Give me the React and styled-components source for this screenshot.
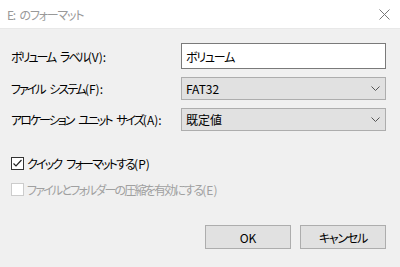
import React, { useState } from "react";
import styled, { createGlobalStyle } from "styled-components";

const GlobalStyle = createGlobalStyle`
  html, body {
    margin: 0;
    padding: 0;
    background: #f0f0f0;
  }
  body {
    font-family: "Noto Sans CJK JP", "Noto Sans", sans-serif;
    font-size: 12px;
    font-feature-settings: "palt";
    color: #000;
  }
`;

const Window = styled.div`
  width: 400px;
  height: 267px;
  display: flex;
  flex-direction: column;
  background: #f0f0f0;
  overflow: hidden;
`;

const TitleBar = styled.div`
  height: 29px;
  display: flex;
  align-items: center;
  justify-content: space-between;
  padding: 0 10px 0 7px;
  background: #ffffff;
  border-bottom: 1px solid #e8e8e8;
  box-sizing: border-box;
`;

const Title = styled.span`
  color: #999999;
  font-size: 12px;
  letter-spacing: -1.2px;
  word-spacing: 3px;
`;

const Body = styled.div`
  flex: 1;
  display: flex;
  flex-direction: column;
  padding: 14px 14px 0 11px;
`;

const Form = styled.div`
  display: grid;
  grid-template-columns: 170px 205px;
  row-gap: 8px;
  align-items: center;
`;

const Label = styled.label`
  font-size: 12px;
  white-space: nowrap;
  letter-spacing: -2px;
  word-spacing: 4px;
`;

/* access key suffix, e.g. (V): — latin glyphs keep normal spacing */
const Key = styled.span`
  letter-spacing: 0;
`;

const TextInput = styled.input`
  box-sizing: border-box;
  width: 205px;
  height: 26px;
  border: 1px solid #7a7a7a;
  background: #ffffff;
  font: inherit;
  font-size: 12px;
  letter-spacing: -1.2px;
  padding: 0 4px;
  outline: none;
`;

const SelectBox = styled.div`
  box-sizing: border-box;
  width: 205px;
  height: 23px;
  border: 1px solid #adadad;
  background: #e1e1e1;
  display: flex;
  align-items: center;
  justify-content: space-between;
  padding: 0 5px 0 4px;
`;

const Checks = styled.div`
  display: flex;
  flex-direction: column;
  gap: 13px;
  margin-top: 26px;
`;

const CheckRow = styled.label`
  display: flex;
  align-items: center;
  gap: 3px;
  height: 13px;
  white-space: nowrap;
  letter-spacing: -1.8px;
  word-spacing: 4px;
  color: ${(p) => (p.$disabled ? "#a0a0a0" : "#000")};
`;

const Box = styled.span`
  box-sizing: border-box;
  width: 13px;
  height: 13px;
  border: 1px solid ${(p) => (p.$disabled ? "#cccccc" : "#333333")};
  background: #ffffff;
  display: flex;
  align-items: center;
  justify-content: center;
`;

const Buttons = styled.div`
  display: flex;
  justify-content: flex-end;
  gap: 9px;
  margin-top: 29px;
`;

const Button = styled.button`
  box-sizing: border-box;
  width: 86px;
  height: 24px;
  border: 1px solid #adadad;
  background: #e1e1e1;
  font: inherit;
  font-size: 12px;
  letter-spacing: ${(p) => (p.$jp ? "-1.2px" : "0")};
  color: #000;
  padding: 0;
`;

const Chevron = () => (
  <svg width="9" height="5" viewBox="0 0 9 5">
    <path d="M0.5 0.5 L4.5 4.5 L8.5 0.5" fill="none" stroke="#555" strokeWidth="1" />
  </svg>
);

const Close = () => (
  <svg width="11" height="11" viewBox="0 0 11 11">
    <path d="M0.5 0.5 L10.5 10.5 M10.5 0.5 L0.5 10.5" stroke="#777" strokeWidth="1" />
  </svg>
);

const Tick = () => (
  <svg width="11" height="11" viewBox="0 0 11 11">
    <path d="M1.5 5.5 L4 8 L9.5 2" fill="none" stroke="#222" strokeWidth="1.2" />
  </svg>
);

export default function App() {
  const [label, setLabel] = useState("ボリューム");

  return (
    <Window>
      <GlobalStyle />
      <TitleBar>
        <Title>E: のフォーマット</Title>
        <Close />
      </TitleBar>
      <Body>
        <Form>
          <Label>
            ボリューム ラベル<Key>(V):</Key>
          </Label>
          <TextInput value={label} onChange={(e) => setLabel(e.target.value)} />
          <Label>
            ファイル システム<Key>(F):</Key>
          </Label>
          <SelectBox>
            FAT32
            <Chevron />
          </SelectBox>
          <Label>
            アロケーション ユニット サイズ<Key>(A):</Key>
          </Label>
          <SelectBox>
            既定値
            <Chevron />
          </SelectBox>
        </Form>
        <Checks>
          <CheckRow>
            <Box>
              <Tick />
            </Box>
            <span>
              クイック フォーマットする<Key>(P)</Key>
            </span>
          </CheckRow>
          <CheckRow $disabled>
            <Box $disabled />
            <span>
              ファイルとフォルダーの圧縮を有効にする<Key>(E)</Key>
            </span>
          </CheckRow>
        </Checks>
        <Buttons>
          <Button>OK</Button>
          <Button $jp>キャンセル</Button>
        </Buttons>
      </Body>
    </Window>
  );
}
